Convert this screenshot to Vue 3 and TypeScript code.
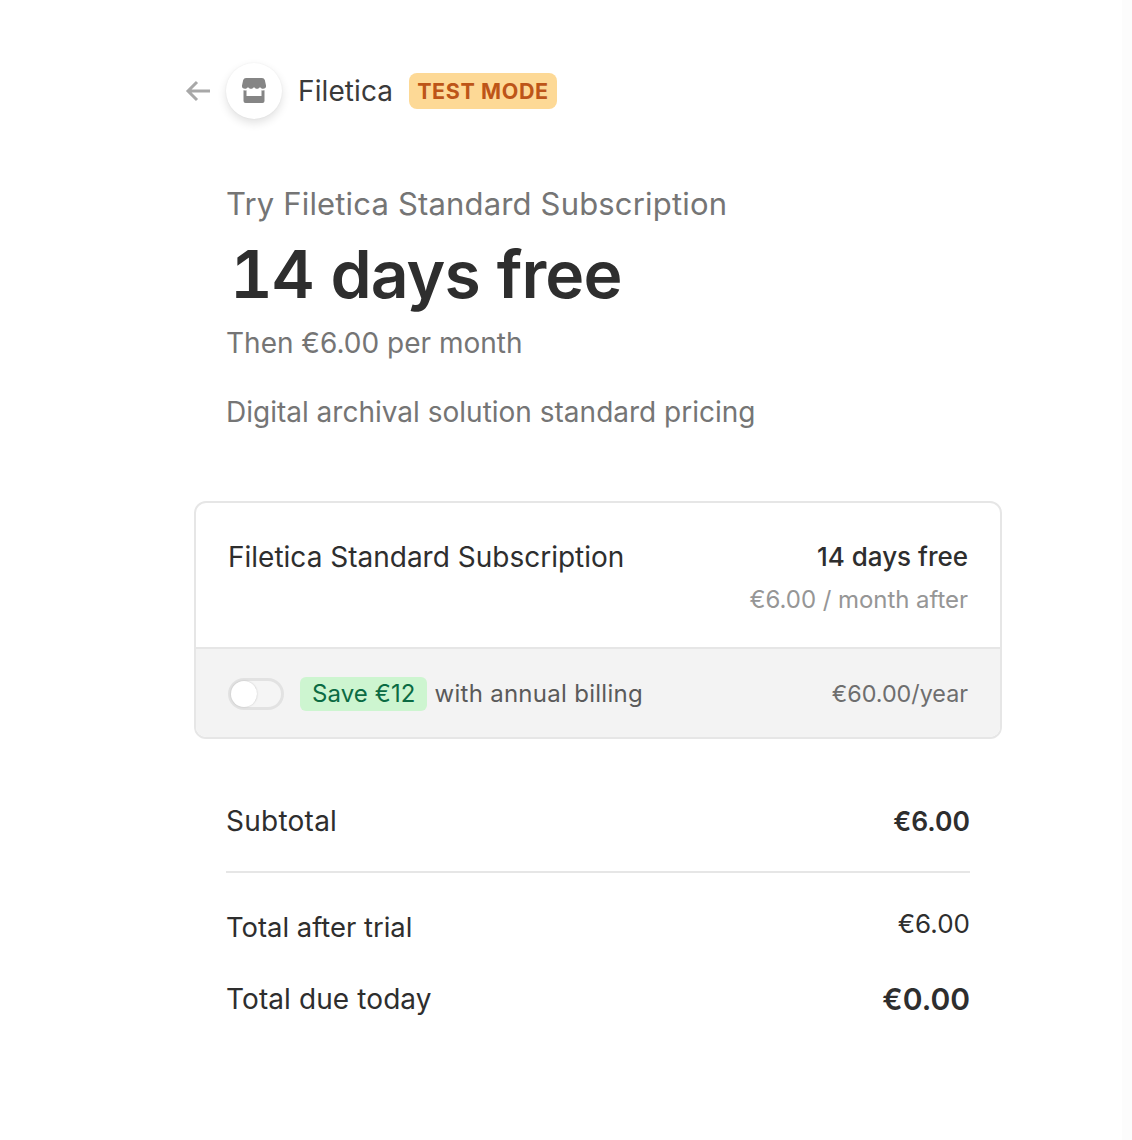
<script setup lang="ts">
const brand = 'Filetica'
</script>

<template>
  <div class="page">
    <main class="summary">
      <header class="head">
        <svg class="back" width="26" height="22" viewBox="0 0 26 22" fill="none" stroke="#a8a8a8" stroke-width="3">
          <path d="M25 11H3M12 2l-9 9 9 9" />
        </svg>
        <span class="logo">
          <svg width="28" height="28" viewBox="0 0 28 28" fill="#858585">
            <path d="M6 1h16a3 3 0 0 1 2.800 2L26 8.500a3 3 0 0 1-3 3.300c-1.300 0-2.400-.7-3-1.800-.6 1.100-1.700 1.800-3 1.800s-2.400-.7-3-1.800c-.6 1.100-1.700 1.800-3 1.800s-2.400-.7-3-1.800c-.6 1.100-1.700 1.800-3 1.800a3 3 0 0 1-3-3.300L3.200 3A3 3 0 0 1 6 1z" />
            <path d="M3.500 13.300c1 .2 2 .2 3-.1V19h15v-5.800c1 .3 2 .3 3 .1V24a2 2 0 0 1-2 2h-17a2 2 0 0 1-2-2z" />
          </svg>
        </span>
        <span class="brand">{{ brand }}</span>
        <span class="badge">TEST MODE</span>
      </header>

      <section class="intro">
        <div class="try">Try Filetica Standard Subscription</div>
        <div class="big">14 days free</div>
        <div class="then">Then €6.00 per month</div>
        <div class="desc">Digital archival solution standard pricing</div>
      </section>

      <section class="card">
        <div class="card-top">
          <div class="plan">Filetica Standard Subscription</div>
          <div class="plan-price">
            <div class="free">14 days free</div>
            <div class="after">€6.00 / month after</div>
          </div>
        </div>
        <div class="card-bottom">
          <span class="toggle"><span class="knob"></span></span>
          <span class="save">Save €12</span>
          <span class="annual">with annual billing</span>
          <span class="year">€60.00/year</span>
        </div>
      </section>

      <section class="totals">
        <div class="row subtotal">
          <span>Subtotal</span>
          <strong>€6.00</strong>
        </div>
        <div class="row after-trial">
          <span>Total after trial</span>
          <span class="val">€6.00</span>
        </div>
        <div class="row due">
          <span>Total due today</span>
          <strong class="val-big">€0.00</strong>
        </div>
      </section>
    </main>
    <div class="edge"></div>
  </div>
</template>

<style scoped>
.page {
  display: flex;
  min-height: 1140px;
  background: #fff;
  font-family: Inter, "Liberation Sans", sans-serif;
  color: #2e2e2e;
}

.summary {
  flex: 1;
  padding: 63px 0 0 185px;
}

.edge {
  width: 10px;
  background: #fcfcfc;
}

.head {
  display: flex;
  align-items: center;
  height: 56px;
}

.back {
  margin-right: 15px;
}

.logo {
  width: 56px;
  height: 56px;
  border-radius: 50%;
  background: #fff;
  box-shadow: 0 4px 10px rgba(0, 0, 0, 0.12), 0 0 2px rgba(0, 0, 0, 0.06);
  display: flex;
  align-items: center;
  justify-content: center;
}

.brand {
  margin-left: 16px;
  font-size: 28px;
  font-weight: 400;
  letter-spacing: 0.1px;
  color: #3a3a3a;
}

.badge {
  margin-left: 16px;
  height: 36px;
  padding: 0 8px;
  box-sizing: border-box;
  display: flex;
  align-items: center;
  background: #fdd996;
  border-radius: 8px;
  color: #bd5518;
  font-size: 21.500px;
  font-weight: 700;
  letter-spacing: 0.6px;
}

.intro {
  margin: 62px 0 0 41px;
}

.try {
  font-size: 31px;
  line-height: 46px;
  color: #757575;
  letter-spacing: 0.17px;
}

.big {
  margin: 2px 0 0 4px;
  font-size: 66px;
  line-height: 90px;
  font-weight: 600;
  font-variant-numeric: tabular-nums;
  letter-spacing: -0.9px;
  color: #2e2e2e;
}

.then {
  margin-top: 2px;
  font-size: 28px;
  line-height: 44px;
  color: #757575;
}

.desc {
  margin-top: 24px;
  font-size: 28px;
  line-height: 46px;
  color: #757575;
}

.card {
  margin: 66px 0 0 9px;
  width: 808px;
  box-sizing: border-box;
  border: 2px solid #e6e6e6;
  border-radius: 12px;
  overflow: hidden;
}

.card-top {
  height: 146px;
  box-sizing: border-box;
  padding: 35px 32px 0;
  display: flex;
  justify-content: space-between;
  border-bottom: 2px solid #e6e6e6;
}

.plan {
  font-size: 28px;
  line-height: 38px;
  color: #2e2e2e;
}

.free {
  font-size: 26px;
  line-height: 38px;
  font-weight: 500;
  color: #2e2e2e;
}

.plan-price {
  text-align: right;
}

.after {
  margin-top: 7px;
  font-size: 24px;
  line-height: 34px;
  letter-spacing: -0.05px;
  color: #969696;
}

.card-bottom {
  height: 88px;
  box-sizing: border-box;
  padding: 1px 32px 0;
  display: flex;
  align-items: center;
  background: #f3f3f3;
}

.toggle {
  width: 56px;
  height: 32px;
  box-sizing: border-box;
  border: 3px solid #e2e2e2;
  border-radius: 16px;
  background: #f5f5f5;
  display: flex;
  align-items: center;
}

.knob {
  width: 26px;
  height: 26px;
  border-radius: 50%;
  background: #fff;
  box-shadow: 0 0 2px rgba(0, 0, 0, 0.2);
}

.save {
  margin-left: 16px;
  height: 34px;
  padding: 0 12px;
  display: flex;
  align-items: center;
  background: #cdf5d0;
  border-radius: 6px;
  color: #0b6b43;
  font-size: 24px;
  letter-spacing: 0.1px;
}

.annual {
  margin-left: 7px;
  font-size: 24px;
  letter-spacing: 0.28px;
  color: #5a5a5a;
}

.year {
  margin-left: auto;
  font-size: 23.300px;
  color: #6e6e6e;
}

.totals {
  margin: 0 0 0 41px;
  width: 744px;
}

.row {
  display: flex;
  justify-content: space-between;
  align-items: center;
  font-size: 27.400px;
  color: #2e2e2e;
}

.subtotal {
  height: 134px;
  padding-top: 32px;
  box-sizing: border-box;
  border-bottom: 2px solid #e6e6e6;
  font-size: 28px;
  letter-spacing: 0.25px;
}

.subtotal strong {
  font-size: 26.500px;
  font-weight: 600;
  letter-spacing: 0;
}

.after-trial {
  height: 38px;
  margin-top: 35px;
}

.val {
  font-size: 26px;
  margin-top: -8px;
}

.due {
  height: 40px;
  margin-top: 33px;
  font-size: 28px;
  letter-spacing: 0.1px;
}

.val-big {
  font-size: 30px;
  font-weight: 600;
  letter-spacing: 0;
}
</style>

<style>
body {
  background: #fff;
}
</style>
